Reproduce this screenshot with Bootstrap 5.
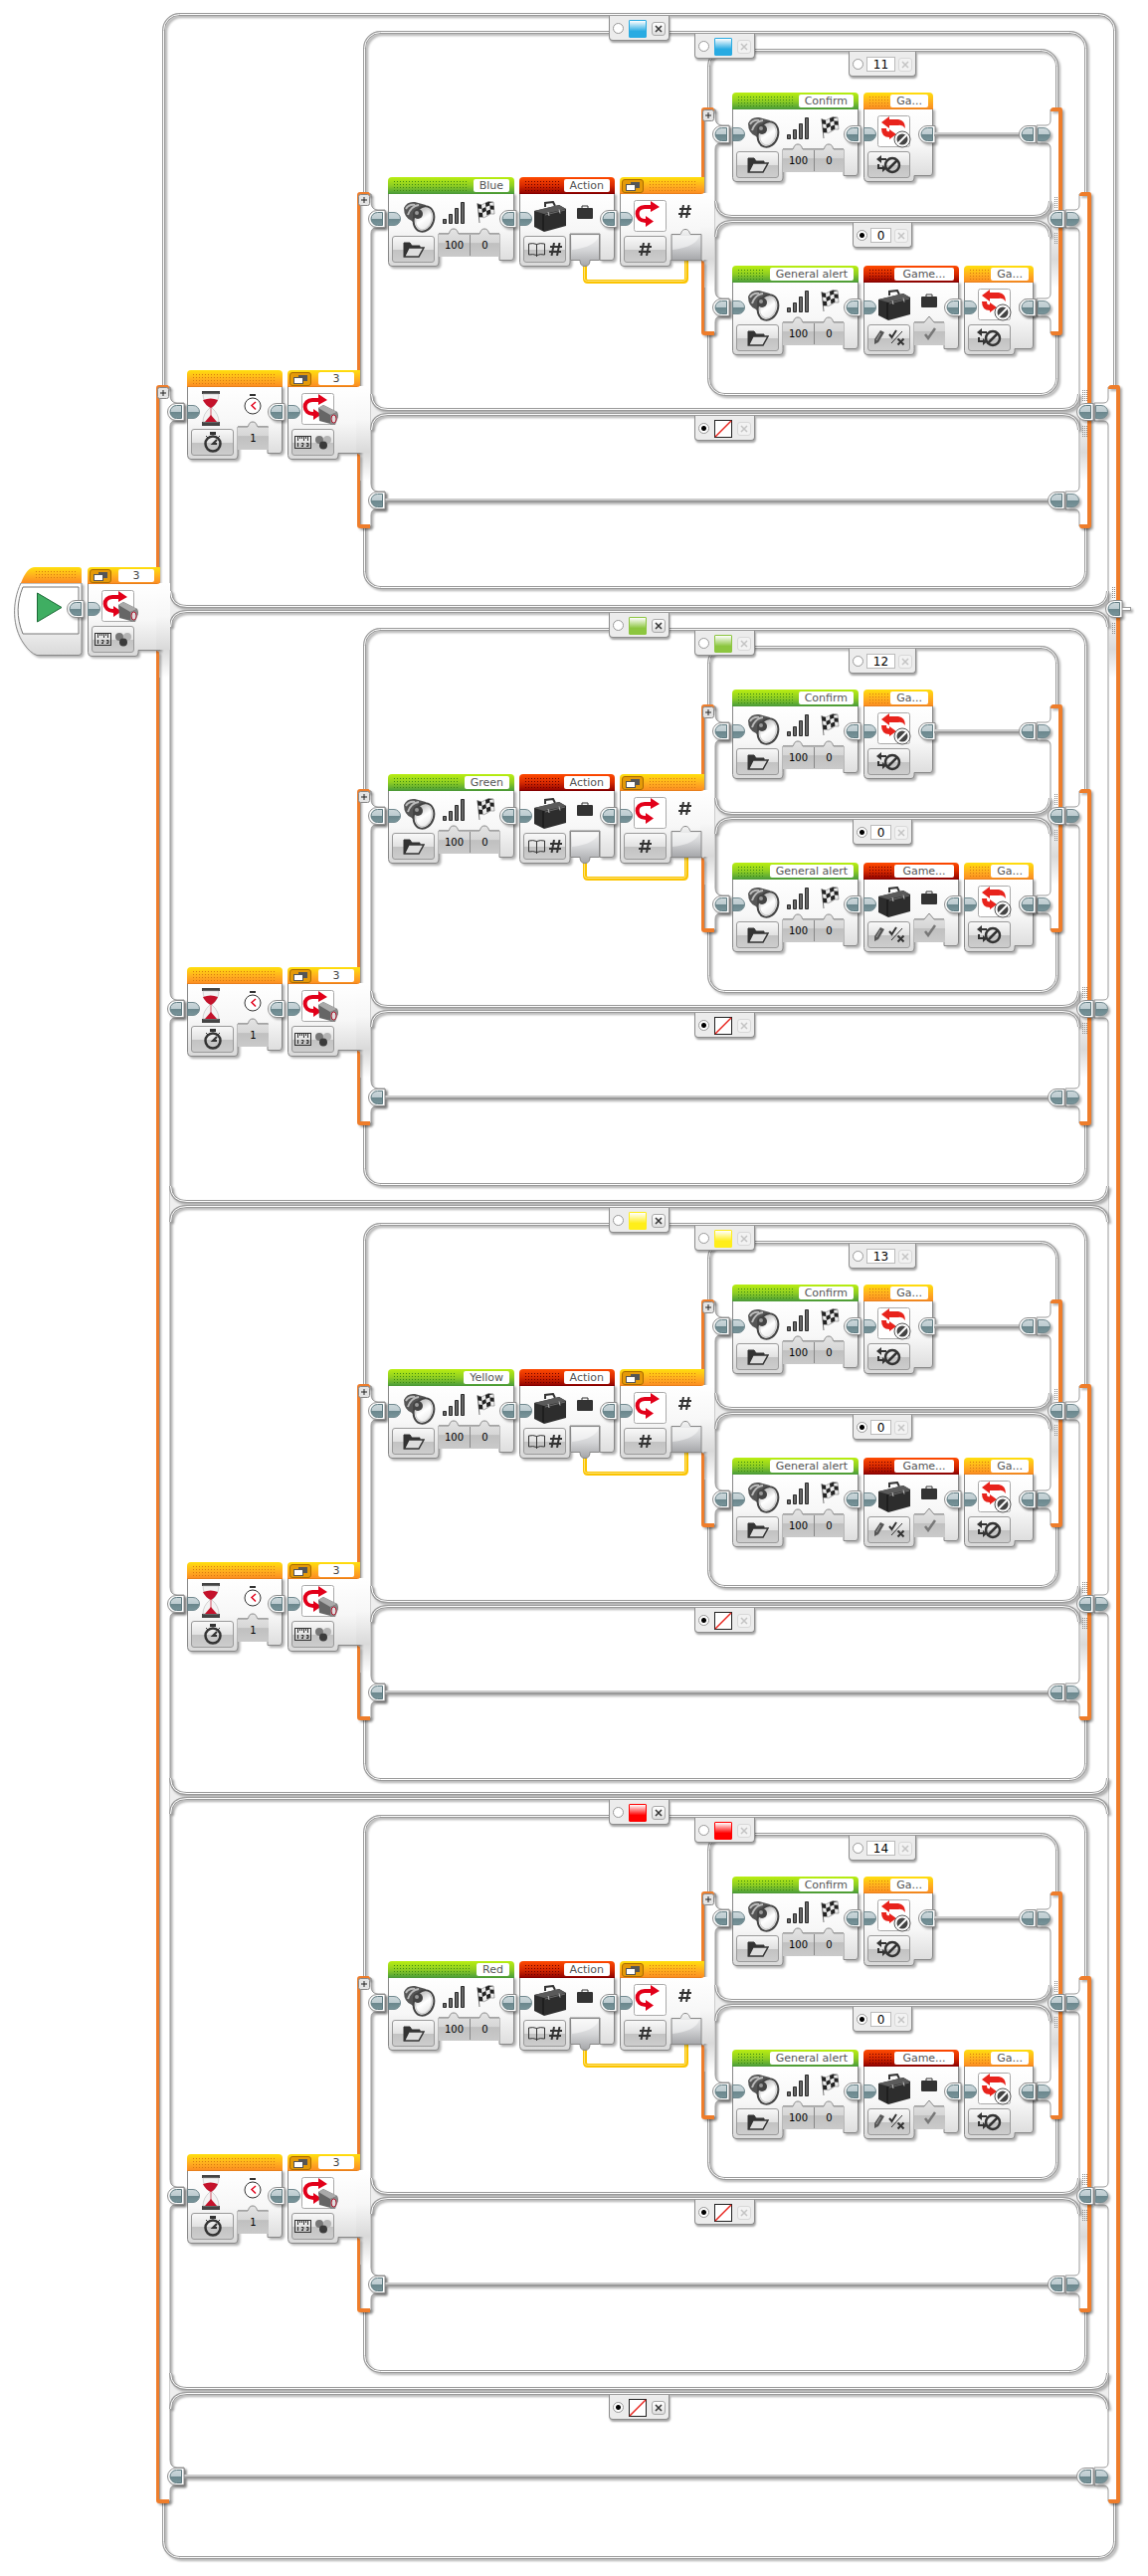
<!DOCTYPE html>
<html lang="en">
<head>
<meta charset="utf-8">
<meta name="viewport" content="width=device-width, initial-scale=1">
<title>Sorter program</title>
<link href="https://cdn.jsdelivr.net/npm/bootstrap@5.3.0/dist/css/bootstrap.min.css" rel="stylesheet">
<style>
  body { font-family: "DejaVu Sans", sans-serif; font-size: 11px; line-height: 13px; color: #000; }
  .layer { position: absolute; left: 0; top: 0; width: 100%; height: 100%; overflow: visible; pointer-events: none; }
  .chain { position: absolute; gap: 5px; }
  .blk { position: relative; height: 90px; flex: none; }
  .blk > svg { position: absolute; left: 0; top: 0; overflow: visible; }
  .soft { filter: drop-shadow(2px 2px 1px rgba(0,0,0,.3)); }
  .head-bar { position: absolute; left: 0; right: 0; top: 2px; height: 13px; padding: 0 5px; }
  .name-box { background: #fff; color: #555; border-radius: 2px; padding: 0 6px; height: 13px; text-align: center; white-space: nowrap; }
  .name-wide { min-width: 60px; }
  .mode-btn { position: absolute; left: 4px; top: 59px; width: 43px; height: 27px; border: 1px solid #9a9a9a; border-radius: 3px; padding: 0;
    background: linear-gradient(#f8f8f8, #e2e2e2 50%, #c2c2c2 51%, #cdcdcd); display: flex; align-items: center; justify-content: center; }
  .param-row { position: absolute; left: 51px; top: 60px; }
  .param { width: 31px; height: 18px; border: 0; background: none; padding: 0; text-align: center; font-size: 10px; line-height: 18px; }
  .case-count { width: 36px; height: 13px; border: 0; border-radius: 2px; background: #fff; color: #444; padding: 0; text-align: center; }
  .fold { width: 22px; height: 14px; padding: 0; border: 1px solid #a86a00; border-radius: 3px; background: #e59a08; display: flex; align-items: center; justify-content: center; }
  .switch-bar { padding: 0 6px 0 2px; }
  .tag { position: absolute; height: 25px; padding: 1px 3px 0; background: #ececec; border: 1px solid #8d8d8d; border-top: 0; border-radius: 0 0 4px 4px; box-shadow: 1px 2px 2px rgba(0,0,0,.35); }
  .tag-c { width: 61px; }
  .tag-n { width: 68px; }
  .tag-0 { width: 60px; }
  .pick { appearance: none; width: 11px; height: 11px; margin: 0; border: 1px solid #999; border-radius: 50%; background: #fff; }
  .pick:checked { background: radial-gradient(circle, #000 0 2px, #fff 3px); }
  .swatch { width: 18px; height: 18px; border-radius: 1px; }
  .case-val { width: 29px; height: 15px; border: 1px solid #bbb; background: #fff; padding: 0; text-align: center; font-size: 12px; line-height: 13px; color: #000; }
  .tag-0 .case-val { width: 21px; }
  .del { width: 14px; height: 14px; padding: 0; border: 1px solid #aaa; border-radius: 3px; background: linear-gradient(#fff, #ddd); color: #333; display: flex; align-items: center; justify-content: center; }
  .del:disabled { border-color: #d8d8d8; background: #f2f2f2; color: #c4c4c4; }
  .task { position: relative; }
</style>
</head>
<body class="bg-white">
<svg width="0" height="0" class="position-absolute" aria-hidden="true">
  <defs>
    <linearGradient id="gBody" x2="0" y2="1"><stop offset="0" stop-color="#fff"/><stop offset=".5" stop-color="#f7f7f7"/><stop offset="1" stop-color="#d9d9d9"/></linearGradient>
    <linearGradient id="gFade" x2="0" y2="1"><stop offset="0" stop-color="#fff"/><stop offset=".35" stop-color="#f4f4f4"/><stop offset=".7" stop-color="#dadada"/><stop offset="1" stop-color="#fff"/></linearGradient>
    <linearGradient id="gGreen" x2="0" y2="1"><stop offset="0" stop-color="#b9ee10"/><stop offset=".5" stop-color="#8fce22"/><stop offset="1" stop-color="#479a3c"/></linearGradient>
    <linearGradient id="gRed" x2="0" y2="1"><stop offset="0" stop-color="#ff4a00"/><stop offset=".5" stop-color="#d82a00"/><stop offset="1" stop-color="#8c0000"/></linearGradient>
    <linearGradient id="gAmber" x2="0" y2="1"><stop offset="0" stop-color="#ffdf0c"/><stop offset=".55" stop-color="#ffae1f"/><stop offset="1" stop-color="#fb8a22"/></linearGradient>
    <linearGradient id="gSlot" x2="0" y2="1"><stop offset="0" stop-color="#e4e4e4"/><stop offset=".5" stop-color="#d6d6d6"/><stop offset=".52" stop-color="#c0c0c0"/><stop offset="1" stop-color="#cacaca"/></linearGradient>
    <linearGradient id="gOut" x2="0" y2="1"><stop offset="0" stop-color="#f4f4f4"/><stop offset=".5" stop-color="#d4d5d7"/><stop offset="1" stop-color="#a5a6a9"/></linearGradient>
    <linearGradient id="gPort" x2="0" y2="1"><stop offset="0" stop-color="#ccd7da"/><stop offset=".5" stop-color="#bccbd0"/><stop offset=".5" stop-color="#6a868c"/><stop offset="1" stop-color="#79959b"/></linearGradient>
    <linearGradient id="gCone" x2="1" y2="1"><stop offset="0" stop-color="#999"/><stop offset=".5" stop-color="#fff"/><stop offset="1" stop-color="#ddd"/></linearGradient>
    <pattern id="dotsgGreen" width="3" height="3" patternUnits="userSpaceOnUse"><path d="M0 1h1v1h-1z" fill="#3d8a12"/></pattern>
    <pattern id="dotsgRed" width="3" height="3" patternUnits="userSpaceOnUse"><path d="M0 1h1v1h-1z" fill="#6b0000"/></pattern>
    <pattern id="dotsgAmber" width="3" height="3" patternUnits="userSpaceOnUse"><path d="M0 1h1v1h-1z" fill="#d67a10"/></pattern>
    <pattern id="grip" width="2" height="2" patternUnits="userSpaceOnUse"><path d="M0 0h1v1h-1z" fill="#888"/></pattern>
  </defs>
  <symbol id="portOut" viewBox="0 0 18 18" overflow="visible">
    <path d="M17 .5H9a8.500 8.500 0 0 0 0 17h8z" fill="#fff" stroke="#8d8d8d"/>
    <path d="M14.500 2.500H9.500a6.500 6.500 0 0 0 0 13h5z" fill="url(#gPort)" stroke="#5f7b81"/>
  </symbol>
  <symbol id="portIn" viewBox="0 0 14 14" overflow="visible">
    <path d="M.5 .5H6a6.500 6.500 0 0 1 0 13H.5z" fill="url(#gPort)" stroke="#71898f"/>
  </symbol>
  <symbol id="speaker" viewBox="0 0 33 32">
    <path d="M1 7Q4 0 12 1L23 4 14 26 9 20Q1 17 1 7z" fill="#555"/><path d="M3 8Q6 3 12 4M5 14Q8 5 16 4" stroke="#bbb" stroke-width="2" fill="none"/>
    <ellipse cx="21" cy="18" rx="10" ry="13" transform="rotate(18 21 18)" fill="url(#gCone)" stroke="#444" stroke-width="2"/>
    <ellipse cx="21" cy="18" rx="8" ry="11" transform="rotate(18 21 18)" fill="none" stroke="#ccc"/>
    <circle cx="15" cy="13" r="5" fill="#444"/><circle cx="14" cy="12" r="2" fill="#999"/>
  </symbol>
  <symbol id="bars" viewBox="0 0 23 23"><g fill="#666" stroke="#2b2b2b"><path d="M.5 18.500h3v4h-3zM6.500 13.500h3v9h-3zM12.500 7.500h3v15h-3zM18.500 1.500h3v21h-3z"/></g></symbol>
  <symbol id="flag" viewBox="0 0 19 22">
    <path d="M1 2 3 22" stroke="#777" stroke-width="1"/><path d="M1 3Q6 5 9 2T17 1L18 13Q14 12 11 15T3 16z" fill="#eee" stroke="#777" stroke-width=".6"/>
    <path d="M1 3l4 1 .4 4-4-.5zM9 2l4-1.500.4 4-4 1.500zM5.400 8l4-2 .5 4-4 2zM13.400 4.500l4 .2.300 4-4-.2zM2 11.500l4 .5.400 4-4 .2zM10 10l4-1.500.400 4-4 2zM17 1l-4 0 .4 1z" fill="#222"/>
  </symbol>
  <symbol id="case3d" viewBox="0 0 34 31">
    <path d="M12 6V2L20 1l2 4" fill="none" stroke="#333" stroke-width="2"/><path d="M1 10 26 4l7 4v17l-22 6-10-5z" fill="#2d2d2d"/>
    <path d="M1 10 26 4l7 4-22 5z" fill="#5a5a5a"/><path d="M10 13v17" stroke="#111"/><path d="M12 14 32 9" stroke="#888" stroke-width=".7"/><path d="M15 11l1 4M26 8.500l1 4" stroke="#bbb"/>
  </symbol>
  <symbol id="case2d" viewBox="0 0 16 15"><path d="M5 3.500V1h6v2.500" fill="none" stroke="#333"/><rect y="3" width="16" height="11" rx="1" fill="#333"/></symbol>
  <symbol id="hash" viewBox="0 0 13 13"><path d="M5 0 2.500 13M10.500 0 8 13M1 4h12M0 9h12" stroke="#333" stroke-width="2" fill="none"/></symbol>
  <symbol id="hourglass" viewBox="0 0 18 35">
    <path d="M0 0h18v3H0zM0 31h18v4H0z" fill="#444"/><path d="M1 3h16q0 8-7 14 7 6 7 14H1q0-8 7-14Q1 11 1 3z" fill="#f3f3f3" stroke="#bbb" stroke-width=".6"/>
    <path d="M1 9q8-3 15 0-2 5-7 8-6-3-8-8z" fill="#c4122b"/><path d="M9 24l6 7H3z" fill="#c4122b"/><path d="M9 16v10" stroke="#c4122b" stroke-width=".7"/>
  </symbol>
  <symbol id="watch" viewBox="0 0 18 21"><path d="M6 0h6v2H6z" fill="#333"/><circle cx="9" cy="12" r="8" fill="#fff" stroke="#333"/><path d="M12 8 8 11.500l4 4" stroke="#e2001a" stroke-width="1.500" fill="none"/></symbol>
  <symbol id="watchB" viewBox="0 0 20 21"><path d="M7 0h6v3H7z" fill="#333"/><circle cx="10" cy="12" r="7.500" fill="none" stroke="#333" stroke-width="2.500"/><path d="M14 8l-4 4h4" stroke="#333" stroke-width="2" fill="none"/><path d="M3 4l2 2M17 4l-2 2" stroke="#333"/></symbol>
  <symbol id="turn" viewBox="0 0 32 31"><path d="M19 7H11C1 7 1 21 12 21" fill="none" stroke="#e2001a" stroke-width="4"/><path d="M17 1l9 6-9 5zM12 16l8 5.500-8 5.500z" fill="#e2001a"/></symbol>
  <symbol id="brick" viewBox="0 0 20 21"><path d="M0 3 5 0l14 7 1 4-4 9L1 16z" fill="#666"/><path d="M0 3 5 0l14 7-7 3z" fill="#aaa"/><path d="M12 10l7-3 1 5-3 8-5 0z" fill="#888"/><ellipse cx="15.500" cy="14" rx="2.500" ry="4" fill="#ddd" stroke="#b3122b"/></symbol>
  <symbol id="breakLoop" viewBox="0 0 33 33">
    <path d="M3 7 11 1v3h9q7 1 7 9-3-4-7-3h-9v3z" fill="#e8231c"/><path d="M3 13h5q0 4 3 3v-2l7 5-7 5v-2q-8 0-8-9z" fill="#e8231c"/>
    <circle cx="24" cy="24" r="8" fill="#fff" stroke="#555"/><circle cx="24" cy="24" r="5.500" fill="#444"/><path d="M20 28l8-8" stroke="#fff" stroke-width="2"/>
  </symbol>
  <symbol id="breakDark" viewBox="0 0 25 19">
    <path d="M0 4 5 0v3h5v2H5v3zM1 9h2v3h3v-2l4 3.500L6 17v-3H1z" fill="#333"/><circle cx="16" cy="10" r="7" fill="none" stroke="#333" stroke-width="2.500"/><path d="M11 15 21 5" stroke="#333" stroke-width="2.500"/>
  </symbol>
  <symbol id="folder" viewBox="0 0 22 16"><path d="M1 15V1h6l2 3h8v2" fill="#333" stroke="#333"/><path d="M1.500 15 6 6h15l-5 9z" fill="#ddd" stroke="#333" stroke-width="1.500"/></symbol>
  <symbol id="book" viewBox="0 0 17 14"><path d="M.5 1Q5 0 8.500 1.500 12 0 16.500 1v11q-4.500-1-8 .5-3.500-1.500-8-.5zM8.500 1.500V14" fill="none" stroke="#333"/></symbol>
  <symbol id="pencil" viewBox="0 0 11 15"><path d="M7 0l4 2-6 10-4 2v-5z" fill="#555"/><path d="M7 3 3 10" stroke="#bbb" stroke-width=".8"/></symbol>
  <symbol id="logic" viewBox="0 0 17 17"><path d="M1 5l2.500 3L8 1M9.500 9.500l6 6M15.500 9.500l-6 6" stroke="#333" stroke-width="2" fill="none"/><path d="M14 2 3 14" stroke="#333"/></symbol>
  <symbol id="tick" viewBox="0 0 12 13"><path d="M1 7l3 4L11 1" stroke="#777" stroke-width="2.500" fill="none"/></symbol>
  <symbol id="ruler" viewBox="0 0 17 13"><rect x=".5" y=".5" width="16" height="12" fill="none" stroke="#333"/><path d="M3.500 1v4M5.500 1v2M7.500 1v2M9.500 1v4M11.500 1v2M13.500 1v4" stroke="#333"/><path d="M3.500 7v4M7 7.500h2v1.500l-2 1.500h2M12 7.500h2v3h-2M12.500 9H14" stroke="#333" fill="none"/></symbol>
  <symbol id="blobs" viewBox="0 0 16 14"><circle cx="4" cy="4" r="4" fill="#777"/><circle cx="12" cy="4" r="4" fill="#b5b5b5"/><circle cx="8" cy="9.500" r="4" fill="#3b3b3b"/></symbol>
  <symbol id="stack" viewBox="0 0 14 9"><rect x="5" width="9" height="6" fill="#555"/><rect x=".5" y="2.500" width="9" height="6" fill="#fff" stroke="#555"/></symbol>
  <symbol id="cross" viewBox="0 0 8 8"><path d="M1 1l6 6M7 1l-6 6" stroke="currentColor" stroke-width="1.500"/></symbol>
</svg>

<main class="program position-relative d-flex flex-column" id="program"></main>

<script>
const ic = (id, w, h, x = 0, y = 0) => `<use href="#${id}" x="${x}" y="${y}" width="${w}" height="${h}"/>`;
const pic = (id, w, h) => `<svg width="${w}" height="${h}" aria-hidden="true"><use href="#${id}"/></svg>`;
const double = d => `<path d="${d}" fill="none" stroke="#999" stroke-width="3" class="soft"/><path d="${d}" fill="none" stroke="#fff" stroke-width="1"/>`;

/* Lines, spines and ports of one switch */
function switchFrame(s) {
  const ll = s.spineL + 14, rl = s.spineR - 12, r = 16;
  let o = `<rect x="${s.l + 1.5}" y="${s.t + 1.5}" width="${s.r - s.l - 3}" height="${s.b - s.t - 3}" rx="${r}" fill="none" stroke="#999" stroke-width="3" class="soft"/>
    <rect x="${s.l + 1.5}" y="${s.t + 1.5}" width="${s.r - s.l - 3}" height="${s.b - s.t - 3}" rx="${r}" fill="none" stroke="#fff"/>`;
  const T = s.top, B = s.bottom;
  let left = `M${s.spineL + 3} ${T + 2}H${ll}`, right = `M${s.spineR - 3} ${T + 2}H${rl}`;
  s.portsL.forEach(y => left += `V${y - 17}Q${ll} ${y - 9} ${ll + 7} ${y - 9}H${ll + 14}V${y + 9}H${ll + 5}Q${ll} ${y + 9} ${ll} ${y + 15}`);
  s.portsR.forEach(y => right += `V${y - 14}Q${rl} ${y - 9} ${rl - 5} ${y - 9}H${rl - 14}V${y + 9}H${rl - 5}Q${rl} ${y + 9} ${rl} ${y + 14}`);
  left += `V${B - 2}H${s.spineL + 3}z`; right += `V${B - 2}H${s.spineR - 3}z`;
  o += `<g class="soft"><path d="${left}" fill="#fff" stroke="#999"/><path d="${right}" fill="#fff" stroke="#999"/></g>`;
  o += `<rect x="${s.spineL + 3}" y="${s.head + 17}" width="10" height="94" fill="url(#gFade)"/>
    <rect x="${rl + 1}" y="${s.head + 17}" width="7" height="94" fill="url(#gFade)"/>`;
  s.bands.forEach(y => {
    o += `<path d="M${ll} ${y - 17}Q${ll + 1} ${y - 3} ${ll + 17} ${y - 3}H${rl - 17}Q${rl - 1} ${y - 3} ${rl} ${y - 17}V${y + 18}Q${rl - 1} ${y + 4} ${rl - 17} ${y + 4}H${ll + 17}Q${ll + 1} ${y + 4} ${ll} ${y + 18}z" fill="#eee"/>`;
    o += double(`M${ll + .5} ${y - 18}Q${ll + 1} ${y - 2.5} ${ll + 17} ${y - 2.5}H${rl - 17}Q${rl - 1} ${y - 2.5} ${rl - .5} ${y - 18}`);
    o += double(`M${ll + .5} ${y + 18}Q${ll + 1} ${y + 2.5} ${ll + 17} ${y + 2.5}H${rl - 17}Q${rl - 1} ${y + 2.5} ${rl - .5} ${y + 18}`);
  });
  const c = s.head + 42;
  o += `<rect x="${rl + 3}" y="${c - 22}" width="5" height="11" fill="url(#grip)"/><rect x="${rl + 3}" y="${c + 14}" width="5" height="11" fill="url(#grip)"/>`;
  o += `<g fill="#ee7d2b" class="soft">
    <path d="M${s.spineL} ${T + 3}q0-3 3-3H${ll - 3}q2 0 2 4H${s.spineL + 3}V${s.head + 15}H${s.spineL}z"/>
    <path d="M${s.spineL} ${s.head + 84}q3 0 3 3V${B - 4}H${ll - 1}v4H${s.spineL + 3}q-3 0-3-3z"/>
    <path d="M${rl} ${T + 4}q0-4 3-4H${s.spineR - 2}q2 0 2 3V${B - 3}q0 3-3 3H${rl + 2}q-2 0-2-4H${s.spineR - 4}V${T + 4}z"/></g>`;
  o += `<g><rect x="${s.spineL + 1.5}" y="${T + 2.5}" width="11" height="11" rx="2" fill="#e4e4e4" stroke="#888"/><path d="M${s.spineL + 4} ${T + 8}h6M${s.spineL + 7} ${T + 5}v6" stroke="#222"/></g>`;
  let p = '';
  s.wires.forEach(([x, y]) => p += `<path d="M${x} ${y - 1}H${rl - 28}" stroke="#ccc" stroke-width="2"/><path d="M${x} ${y + 1}H${rl - 28}" stroke="#999" stroke-width="2"/>`);
  s.portsL.forEach(y => p += ic('portOut', 18, 18, ll - 3, y - 9));
  s.portsR.forEach(y => p += ic('portOut', 18, 18, rl - 32, y - 9) + ic('portIn', 14, 14, rl - 13, y - 7));
  return { base: o, ports: `<g class="soft">${p}</g>` };
}

/* Block shells */
function shell(w, tone, { slots = 0, dots = [6, w - 6], kind = 'in', head = false } = {}) {
  const foot = `M.5 16V85.500Q.5 89.500 4 89.500H48Q51 89.500 51 86`;
  let d;
  if (head) d = `${foot}V83.500H${w + (slots ? -2 : 0)}`;
  else if (slots) d = `${foot}V83.500V57H${w - 15}V83.500H${w - 3}Q${w - .5} 83.500 ${w - .5} 80V16`;
  else d = `${foot}V83.500H${w - 3}Q${w - .5} 83.500 ${w - .5} 80V16`;
  let o = head
    ? `<path d="${foot}V83.500H${w}V16z" fill="url(#gBody)" class="soft"/><path d="M${w - 4} 16h14v67h-14z" fill="url(#gBody)"/><path d="${d}" fill="none" stroke="#888"/>`
    : `<path d="${d}z" fill="url(#gBody)" stroke="#888" class="soft"/>`;
  if (kind === 'in' && slots) {
    o += `<path d="M51 57h10c1-1 1-5 5-5s4 4 5 5h11${slots > 1 ? 'h10c1-1 1-5 5-5s4 4 5 5h10' : ''}V80H51z" fill="url(#gSlot)"/>
      <path d="M51 57h10c1-1 1-5 5-5s4 4 5 5h11${slots > 1 ? 'h10c1-1 1-5 5-5s4 4 5 5h10' : ''}" fill="none" stroke="#888"/>`;
    if (slots > 1) o += `<path d="M82.500 58v21" stroke="#888"/>`;
  }
  if (kind === 'logic') o += `<path d="M51 57h10l5-6 5 6h11V80H51z" fill="url(#gSlot)"/><path d="M51 57h10l5-6 5 6h10" fill="none" stroke="#888"/>` + ic('tick', 12, 13, 61, 62);
  if (kind === 'out') o += `<path d="M51.500 57.500h29v26H71q0 6-5 6t-5-6H51.500z" fill="url(#gOut)" stroke="#888"/><path d="M53 59h27q-3 11-27 14z" fill="#fff" opacity=".5"/>`;
  if (kind === 'num') o += `<path d="M52 57.500h9c1-1 1-5 5-5s4 4 5 5h11v26H52z" fill="url(#gOut)" stroke="#888"/><path d="M53 59h27q-3 11-27 14z" fill="#fff" opacity=".5"/>`;
  const edge = { gGreen: '#4d9a35', gRed: '#850000', gAmber: '#e8801d' }[tone];
  o += `<path d="M0 17V4Q0 0 4 0H${head ? w : w - 4}${head ? 'V14q0 3-3 3' : `Q${w} 0 ${w} 4V17`}z" fill="url(#${tone})"/><path d="M0 16.500H${head ? w - 3 : w}" stroke="${edge}"/>`;
  if (dots) o += `<rect x="${dots[0]}" y="3" width="${dots[1] - dots[0]}" height="11" fill="url(#dots${tone})"/>`;
  return o + ic('portIn', 14, 14, 0, 35);
}
const outPort = w => `<g class="soft">${ic('portOut', 18, 18, w - 15, 33)}</g>`;
const block = (w, art, html) => `<div class="blk" style="width:${w}px"><svg width="${w}" height="90" aria-hidden="true">${art}</svg>${html}</div>`;
const mode = (label, inner) => `<button type="button" class="mode-btn" aria-label="${label}">${inner}</button>`;
const bar = (name, wide = '') => `<div class="head-bar d-flex justify-content-end"><span class="name-box ${wide}">${name}</span></div>`;
const param = (label, v) => `<input class="param" aria-label="${label}" value="${v}">`;

const iconBox = `<rect x="14.500" y="23.500" width="32" height="31" rx="2" fill="#fff" stroke="#aaa"/>`;
const sound = (name, labelW) => block(127,
  shell(127, 'gGreen', { slots: 2, dots: [5, 118 - labelW] }) + ic('speaker', 33, 32, 15, 24) + ic('bars', 23, 23, 55, 24) + ic('flag', 19, 22, 89, 24) + outPort(127),
  bar(name) + mode('Play file', pic('folder', 22, 16)) + `<div class="param-row d-flex">${param('Volume', 100)}${param('Play type', 0)}</div>`);
const readVar = block(96,
  shell(96, 'gRed', { slots: 1, kind: 'out', dots: [5, 42] }) + ic('case3d', 34, 31, 14, 24) + ic('case2d', 16, 15, 58, 28) + outPort(96),
  bar('Action') + mode('Read numeric', pic('book', 17, 14) + '<span class="ms-1 d-flex">' + pic('hash', 13, 13) + '</span>'));
const writeVar = block(96,
  shell(96, 'gRed', { slots: 1, kind: 'logic', dots: [5, 28] }) + ic('case3d', 34, 31, 14, 24) + ic('case2d', 16, 15, 58, 28) + outPort(96),
  bar('Game...', 'name-wide') + mode('Write logic', pic('pencil', 11, 15) + '<span class="ms-1 d-flex">' + pic('logic', 17, 17) + '</span>'));
const breaker = block(70,
  shell(70, 'gAmber', { dots: [5, 25] }) + iconBox + ic('breakLoop', 33, 33, 15, 23) + outPort(70),
  bar('Ga...') + mode('Loop interrupt', pic('breakDark', 25, 19)));
const wait = block(96,
  shell(96, 'gAmber', { slots: 1, dots: [5, 88] }) + ic('hourglass', 18, 35, 15, 21) + ic('watch', 18, 21, 57, 24) + outPort(96),
  mode('Time', pic('watchB', 20, 21)) + `<div class="param-row d-flex">${param('Seconds', 1)}</div>`);
const fold = `<button type="button" class="fold" aria-label="Tabbed view">${pic('stack', 14, 9)}</button>`;
const sensorSwitch = block(73,
  shell(73, 'gAmber', { head: true, dots: null }) + iconBox + ic('turn', 32, 31, 14, 23) + ic('brick', 20, 21, 31, 35),
  `<div class="head-bar switch-bar d-flex justify-content-between">${fold}<input class="case-count" aria-label="Port" value="3"></div>` +
  mode('Measure colour', pic('ruler', 17, 13) + '<span class="ms-1 d-flex">' + pic('blobs', 16, 14) + '</span>'));
const numberSwitch = block(85,
  shell(85, 'gAmber', { head: true, slots: 1, kind: 'num', dots: [28, 77] }) + iconBox + ic('turn', 32, 31, 14, 23) + ic('hash', 13, 13, 59, 28),
  `<div class="head-bar switch-bar">${fold}</div>` + mode('Numeric', pic('hash', 13, 13)));
const start = `<div class="blk" style="width:68px"><svg width="68" height="90" aria-hidden="true">
  <path d="M6 16C-3 35-3 60 9 77Q15 86 22 88.500H64q3 0 3-3V16z" fill="url(#gBody)" stroke="#888" class="soft"/>
  <path d="M8 20H64V67H8C1 50 2 35 8 20z" fill="#fff" stroke="#777"/>
  <path d="M6 16Q12 0 20 0H64Q67 0 67 3V16z" fill="url(#gAmber)"/><rect x="21" y="3" width="42" height="8" fill="url(#dotsgAmber)"/>
  <path d="M22.500 26 47 40.500 22.500 55z" fill="#3fae62" stroke="#1b6b36"/>${outPort(67)}</svg></div>`;
const chain = (x, y, ...b) => `<div class="chain d-flex" style="left:${x}px;top:${y}px">${b.join('')}</div>`;

/* Case tags */
const cross = on => `<button type="button" class="del" aria-label="Remove case"${on ? '' : ' disabled'}>${pic('cross', 8, 8)}</button>`;
const tag = (cls, x, y, group, on, mid, live) => `<div class="tag ${cls} d-flex align-items-center justify-content-between" style="left:${x}px;top:${y}px">
  <input type="radio" class="pick" name="${group}" aria-label="Default case"${on ? ' checked' : ''}>${mid}${cross(live)}</div>`;
const colour = c => `<span class="swatch" style="background:linear-gradient(#fff, ${c} 65%);border:1px solid ${c}"></span>`;
const none = `<svg width="18" height="18" aria-label="No colour"><rect x=".5" y=".5" width="17" height="17" fill="#fff" stroke="#222"/><path d="M1 17 17 1" stroke="#e8231c" stroke-width="1.500"/></svg>`;
const num = v => `<input class="case-val" aria-label="Case value" value="${v}">`;

const tasks = [
  { name: 'Blue', colour: '#29abe2', code: 11, h: 600, lw: 38 },
  { name: 'Green', colour: '#8cc63f', code: 12, h: 598, lw: 47 },
  { name: 'Yellow', colour: '#ffee1a', code: 13, h: 595, lw: 50 },
  { name: 'Red', colour: '#ff0000', code: 14, h: 598, lw: 34 }
];

const mid = switchFrame({ l: 365, t: 31, r: 1093, b: 592, spineL: 359, spineR: 1097, top: 193, bottom: 531, head: 372, bands: [414], portsL: [220, 503], portsR: [220, 503], wires: [[386, 503]] });
const inner = switchFrame({ l: 711, t: 49, r: 1064, b: 398, spineL: 705, spineR: 1068, top: 108, bottom: 337, head: 178, bands: [220], portsL: [135, 309], portsR: [135, 309], wires: [[939, 135]] });

let offset = 0;
const starts = [];
const sections = tasks.map((t, i) => {
  starts.push(offset); offset += t.h;
  return `<section class="task" style="height:${t.h}px" aria-label="${t.name}">
    <svg class="layer" aria-hidden="true">${mid.base}${inner.base}
      <path d="M588 266v14q0 3 3 3h96q3 0 3-3v-20" fill="none" stroke="#fbc400" stroke-width="4"/><path d="M587.500 266v14q0 2.500 3 2.500h96q3 0 3-3v-20" fill="none" stroke="#fde27a" stroke-width="1"/></svg>
    ${chain(188, 372, wait, sensorSwitch)}
    ${chain(390, 178, sound(t.name, t.lw), readVar, numberSwitch)}
    ${chain(736, 93, sound('Confirm', 57), breaker)}
    ${chain(736, 267, sound('General alert', 85), writeVar, breaker)}
    <svg class="layer" aria-hidden="true">${mid.ports}${inner.ports}</svg>
    ${tag('tag-c', 612, 16, 'outer' , false, colour(t.colour), true)}
    ${tag('tag-c', 698, 34, 'mid' + i, false, colour(t.colour), false)}
    ${tag('tag-n', 853, 52, 'in' + i, false, num(t.code), false)}
    ${tag('tag-0', 857, 224, 'in' + i, true, num(0), false)}
    ${tag('tag-c', 698, 418, 'mid' + i, true, none, false)}
  </section>`;
}).join('');
const last = offset;
const ports = starts.map(y => y + 414).concat(last + 98);
const outer = switchFrame({ l: 163, t: 13, r: 1122, b: 2572, spineL: 157, spineR: 1126, top: 387, bottom: 2516, head: 570, bands: starts.slice(1).concat(last).map(y => y + 12), portsL: ports, portsR: ports, wires: [[185, last + 98]] });

document.getElementById('program').innerHTML = `
  <svg class="layer" aria-hidden="true">${outer.base}</svg>
  ${sections}
  <section class="task" style="height:198px" aria-label="No colour">${tag('tag-c', 612, 16, 'outer', true, none, true)}</section>
  ${chain(15, 570, start, sensorSwitch)}
  <svg class="layer" aria-hidden="true">${outer.ports}
    <g class="soft"><path d="M1127 612h10" stroke="#999" stroke-width="4"/><path d="M1127 612h9" stroke="#fff" stroke-width="2"/>${ic('portOut', 18, 18, 1111, 603)}</g></svg>`;
</script>
<script src="https://cdn.jsdelivr.net/npm/bootstrap@5.3.0/dist/js/bootstrap.bundle.min.js"></script>
</body>
</html>
